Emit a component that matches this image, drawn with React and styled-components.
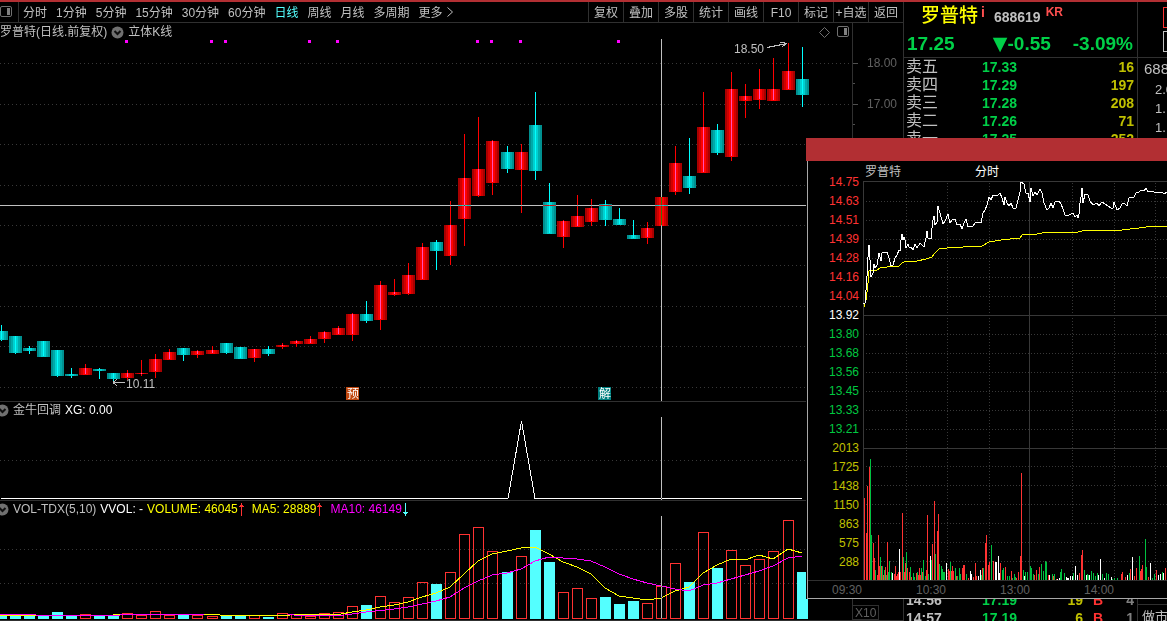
import React, { useState } from 'react';
import styled, { createGlobalStyle } from 'styled-components';

const GlobalStyle = createGlobalStyle`
  * {
    box-sizing: border-box;
  }
  body {
    margin: 0;
    background: #000;
    overflow: hidden;
  }
  button {
    border: 0;
    margin: 0;
    padding: 0;
    background: none;
    color: inherit;
    font: inherit;
    cursor: pointer;
    white-space: nowrap;
  }
`;

const Page = styled.div`
  min-height: 100vh;
  position: relative;
  border-top: 2px solid #b22f33;
  background: #000;
  color: #c0c0c0;
  font-family: "Liberation Sans", "Noto Sans CJK SC", sans-serif;
  font-size: 12px;
  line-height: 15px;
`;

const Workspace = styled.div`
  display: flex;
  align-items: stretch;
`;

const Main = styled.main`
  flex: 1;
  min-width: 0;
`;

const Toolbar = styled.nav`
  display: flex;
  justify-content: space-between;
  height: 21px;
  border-bottom: 1px solid #303030;
`;

const Periods = styled.div`
  display: flex;
  align-items: center;
  gap: 9px;
`;

const PanelToggle = styled.button`
  display: flex;
  align-items: center;
  height: 20px;
  padding-right: 6px;
  margin-right: -5px;
  border-right: 1px solid #303030;
`;

const PeriodButton = styled.button`
  padding-top: 2px;
  color: ${(p) => (p.$active ? '#54ffff' : '#c0c0c0')};
`;

const Tools = styled.div`
  display: flex;
`;

const ToolButton = styled.button`
  width: 35px;
  padding-top: 2px;
  border-left: 1px solid #303030;
`;

const Charts = styled.div`
  display: grid;
  grid-template-columns: minmax(0, 1fr) 51px;
`;

const Panel = styled.section`
  border-bottom: 1px solid #303030;
`;

const PanelTitle = styled.div`
  display: flex;
  align-items: center;
  gap: 4px;
  height: ${(p) => p.$height}px;
  padding-top: 2px;
  white-space: nowrap;
`;

const Reading = styled.span`
  display: flex;
  align-items: center;
  gap: 1px;
  margin-right: ${(p) => (p.$arrow ? '4px' : '0')};
  color: ${(p) => p.$color || '#c0c0c0'};
`;

const FoldButton = styled.button`
  display: flex;
  margin-left: ${(p) => (p.$clipped ? '-4px' : '0')};
`;

const PanelIcons = styled.div`
  display: flex;
  align-items: center;
  gap: 7px;
  margin-left: auto;
  padding-right: 3px;
`;

const Plot = styled.svg`
  display: block;
  width: 100%;
  height: ${(p) => p.$height}px;
  shape-rendering: crispEdges;
`;

const CrossLine = styled.line`
  stroke: #c0c0c0;
  mix-blend-mode: difference;
`;

const PriceAxis = styled.div`
  display: flex;
  flex-direction: column;
  justify-content: space-between;
  border-left: 1px solid #303030;
  border-bottom: 1px solid #303030;
`;

const AxisList = styled.div`
  padding-top: 20px;
`;

const AxisLabel = styled.div`
  display: flex;
  align-items: center;
  justify-content: space-between;
  height: 41px;
  padding-right: 6px;
  color: #606060;
`;

const Multiplier = styled.div`
  width: 26px;
  height: 15px;
  padding-left: 2px;
  border: 1px solid #303030;
  border-left: 0;
  line-height: 14px;
  color: #606060;
`;

const Quote = styled.aside`
  flex: none;
  display: flex;
  flex-direction: column;
  justify-content: space-between;
  width: 234px;
  border-left: 1px solid #303030;
`;

const QuoteHead = styled.header`
  border-bottom: 1px solid #303030;
`;

const NameRow = styled.div`
  display: flex;
  align-items: flex-start;
  height: 28px;
  padding-left: 17px;
`;

const StockName = styled.h1`
  margin: 0;
  color: #ffff00;
  font-size: 19px;
  font-weight: 500;
  line-height: 28px;
`;

const Code = styled.span`
  padding: 8px 2px 0 9px;
  font-size: 14px;
  font-weight: bold;
`;

const Tag = styled.span`
  padding: 3px 0 0 3px;
  color: #ff5050;
  font-size: ${(p) => p.$size}px;
  font-weight: bold;
`;

const PriceRow = styled.div`
  display: flex;
  justify-content: flex-end;
  gap: 22px;
  align-items: center;
  height: 27px;
  padding: 0 4px 0 3px;
  color: #00d048;
  font-size: 19px;
  font-weight: bold;
`;

const LastPrice = styled.span`
  margin-right: auto;
`;

const DownMark = styled.span`
  font-family: "DejaVu Sans", sans-serif;
`;

const QuoteTable = styled.table`
  width: 100%;
  table-layout: fixed;
  border-collapse: collapse;
  font-size: 14px;
  font-weight: bold;
`;

const QuoteRow = styled.tr`
  height: 18px;
`;

const Level = styled.th`
  width: 78px;
  padding: 0 0 0 2px;
  text-align: left;
  font-size: ${(p) => (p.$big ? 16 : 14)}px;
  font-weight: ${(p) => (p.$big ? 'normal' : 'bold')};
  line-height: 18px;
`;

const Cell = styled.td`
  width: ${(p) => (p.$width ? `${p.$width}px` : 'auto')};
  padding: 0 3px 0 0;
  text-align: ${(p) => p.$align || 'left'};
  color: ${(p) => p.$color};
  line-height: 18px;
`;

const Trades = styled.div`
  height: 30px;
  overflow: hidden;
`;

const Side = styled.aside`
  flex: none;
  display: flex;
  flex-direction: column;
  justify-content: space-between;
  width: 30px;
  overflow: hidden;
  border-left: 1px solid #303030;
  white-space: nowrap;
`;

const SideHead = styled.div`
  display: grid;
  gap: 3px;
  height: 56px;
  padding: 5px 0 5px 25px;
  border-bottom: 1px solid #303030;
`;

const SideBox = styled.div`
  width: 40px;
  border: 1px solid ${(p) => p.$color};
`;

const SideCode = styled.div`
  padding-left: 6px;
  font-size: 15px;
  line-height: 22px;
`;

const SideValue = styled.div`
  padding-left: 17px;
  font-size: 13px;
  line-height: 19px;
`;

const SideFoot = styled.div`
  height: 17px;
  padding: 4px 0 0 4px;
  border-top: 1px solid #303030;
  font-size: 13px;
`;

const Popup = styled.section`
  position: absolute;
  top: 136px;
  right: 0;
  width: 361px;
  background: #000;
`;

const PopupBar = styled.div`
  height: 23px;
  background: #b22f33;
`;

const PopupBody = styled.div`
  margin-left: 1px;
  border-left: 1px solid #a8a8a8;
  border-bottom: 1px solid #a8a8a8;
`;

const PopupGrid = styled.div`
  display: grid;
  grid-template-columns: 55px minmax(0, 1fr);
  border-bottom: 1px solid #303030;
`;

const Scale = styled.div`
  padding: 12px 4px 0 0;
  text-align: right;
`;

const ScaleLabel = styled.div`
  height: 19px;
  line-height: 19px;
  color: ${(p) => p.$color};
`;

const PopupTitle = styled.div`
  display: flex;
  gap: 74px;
  height: 20px;
  padding-left: 2px;
  line-height: 22px;
`;

const Bright = styled.span`
  color: #fff;
`;

const Times = styled.div`
  display: flex;
  height: 17px;
  padding-left: 24px;
  overflow: hidden;
  line-height: 18px;
  color: #606060;
`;

const TimeLabel = styled.span`
  flex: none;
  width: 84px;
`;

const RED = '#ff3232';
const CYAN = '#54ffff';
const GREEN = '#00c840';
const YELLOW = '#c0c000';

const periods = ['分时', '1分钟', '5分钟', '15分钟', '30分钟', '60分钟', '日线', '周线', '月线', '多周期', '更多'];
const tools = ['复权', '叠加', '多股', '统计', '画线', 'F10', '标记', '+自选', '返回'];

// center x, high, low, body top, body bottom, direction, volume top
const candles = [
  [1, 325, 341, 331, 340, 'd', 615], [15, 336, 354, 336, 353, 'd', 615],
  [29, 346, 354, 348, 351, 'd', 616], [43, 341, 357, 341, 357, 'd', 616],
  [57, 350, 377, 350, 376, 'd', 612], [71, 368, 378, 374, 376, 'd', 616],
  [85, 364, 375, 368, 375, 'u', 614], [99, 368, 379, 369, 371, 'd', 615],
  [113, 373, 381, 373, 379, 'd', 616], [127, 370, 380, 373, 378, 'u', 613],
  [141, 360, 376, 373, 374, 'u', 615], [155, 354, 378, 359, 372, 'u', 611],
  [169, 349, 360, 352, 360, 'u', 615], [183, 348, 361, 348, 355, 'd', 615],
  [197, 350, 358, 351, 355, 'u', 615], [212, 346, 354, 350, 354, 'u', 616],
  [226, 343, 354, 343, 353, 'd', 616], [240, 347, 359, 347, 359, 'd', 616],
  [254, 349, 362, 349, 358, 'u', 615], [268, 346, 356, 349, 354, 'd', 617],
  [282, 343, 349, 345, 347, 'u', 613], [296, 340, 347, 341, 344, 'u', 614],
  [310, 336, 344, 339, 344, 'u', 616], [324, 331, 343, 332, 339, 'u', 613],
  [338, 326, 335, 328, 335, 'u', 612], [352, 313, 341, 314, 335, 'u', 606],
  [366, 301, 323, 314, 321, 'd', 605], [380, 281, 330, 285, 320, 'u', 596],
  [394, 279, 296, 292, 295, 'u', 602], [408, 263, 295, 275, 294, 'u', 597],
  [422, 243, 280, 247, 280, 'u', 582], [436, 240, 270, 242, 251, 'd', 584],
  [450, 201, 265, 225, 256, 'u', 572], [464, 134, 246, 178, 219, 'u', 534],
  [478, 117, 197, 169, 196, 'u', 527], [492, 140, 195, 141, 183, 'u', 551],
  [507, 146, 173, 152, 169, 'd', 572], [521, 144, 213, 152, 170, 'u', 556],
  [535, 92, 180, 125, 171, 'd', 530], [549, 183, 234, 202, 234, 'd', 562],
  [563, 220, 248, 221, 237, 'u', 592], [577, 195, 227, 216, 227, 'u', 588],
  [591, 199, 226, 208, 222, 'u', 598], [605, 200, 226, 204, 220, 'd', 597],
  [619, 208, 225, 219, 225, 'd', 604], [633, 220, 239, 235, 239, 'd', 601],
  [647, 222, 244, 228, 238, 'u', 603], [661, 197, 226, 197, 226, 'u', 586],
  [675, 146, 195, 163, 192, 'u', 563], [689, 138, 194, 176, 188, 'd', 582],
  [703, 92, 173, 127, 173, 'u', 532], [717, 124, 155, 130, 153, 'd', 568],
  [731, 72, 161, 89, 157, 'u', 550], [745, 84, 118, 96, 101, 'u', 565],
  [759, 69, 109, 89, 100, 'u', 559], [773, 58, 101, 89, 101, 'u', 551],
  [788, 43, 90, 71, 90, 'u', 520], [802, 47, 107, 79, 95, 'd', 572],
];

const signals = [126, 211, 225, 309, 337, 477, 491, 520, 618];

const ma5 = '0,615 107,616 120,614 204,614 220,615 290,615 317,614 341,614 352,612 366,610 380,607 394,605 408,602 422,597 436,593 450,587 464,574 478,561 492,554 507,551 521,548 535,547 549,554 563,562 577,567 591,574 605,588 619,596 633,598 647,600 661,598 675,591 689,587 703,573 717,565 731,559 745,560 759,555 773,559 788,549 802,553';
const ma10 = '0,614 36,615 90,615 120,615 205,614 288,614 300,616 345,615 366,612 394,609 408,607 422,604 436,601 450,597 464,588 478,581 492,575 507,573 521,569 535,561 549,557 563,558 577,559 591,561 605,567 619,574 633,579 647,583 661,586 675,589 689,591 703,585 717,583 731,579 745,575 759,571 773,566 788,558 802,556';

const intraday = '0,122 2,122 3,109 4,95 5,76 6,64 7,79 8,96 10,92 11,83 12,87 14,84 16,72 17,76 18,80 19,72 20,71 24,71 26,77 28,85 30,84 32,77 34,74 36,69 37,70 38,59 39,53 40,59 41,56 42,59 43,67 45,63 46,66 48,66 50,69 52,63 54,67 57,62 61,66 63,57 64,50 65,57 68,58 69,47 70,39 71,35 72,44 74,41 75,25 77,32 80,43 82,40 85,33 87,42 89,39 92,38 94,44 97,43 99,48 101,42 103,38 105,46 110,45 112,42 115,41 118,42 120,32 122,29 124,24 126,16 128,19 130,14 135,14 137,12 139,17 141,24 142,16 144,22 146,25 148,22 150,27 153,27 155,19 157,11 158,1 161,3 163,12 165,12 167,21 168,7 170,15 172,11 174,14 177,8 179,12 181,22 184,29 186,27 188,22 190,27 192,21 196,20 198,23 200,28 202,34 206,34 210,32 212,36 214,34 215,37 216,33 217,22 218,16 219,7 220,22 222,13 225,14 227,20 230,24 234,22 236,25 239,21 245,25 248,27 250,27 251,21 254,29 257,27 259,23 261,22 264,25 266,17 271,16 273,12 276,11 278,9 281,10 283,7 285,11 288,10 291,11 293,11 296,12 299,11 301,13 304,11';
const average = '1,126 3,119 4,111 5,102 6,90 14,89 17,87 24,86 36,85 39,82 43,80 54,80 63,78 69,76 72,72 76,68 84,67 100,66 119,65 126,61 138,59 157,57 159,54 174,53 184,51 215,51 223,49 259,49 276,47 283,46 304,45';

// each entry is minute, height and colour letter
const ticks = '1,82r 3,47r 4,94r 6,113r 7,121g 8,45g 10,37r 11,22r 12,10g 14,5r 15,45r 16,14r 17,23g 18,14r 19,14g 20,5r 21,10g 22,13r 23,5g 24,38r 25,8g 26,19g 28,8g 29,7w 31,6r 32,14r 33,4r 34,6r 35,8r 36,31w 37,8r 39,67r 40,23g 41,8r 42,17r 43,28g 44,12r 46,8r 47,13g 48,3r 50,7g 51,3g 53,7r 54,8g 55,5r 56,12r 57,5r 58,12g 59,8r 60,20g 62,4g 63,10r 64,65r 65,6g 67,24w 68,20g 69,36r 71,79r 72,26g 74,49r 75,66r 76,16g 78,14g 79,11g 80,8g 81,8g 83,17w 85,11r 86,9r 87,18g 88,9r 89,14r 90,9r 92,12g 93,4r 94,4g 96,12g 97,6g 99,12r 100,15r 101,15r 103,6g 105,2r 107,9w 108,6w 110,3r 112,17r 113,4r 115,4w 117,10w 118,5g 119,12r 120,12g 122,37r 123,45r 125,15r 126,18r 128,35g 130,19r 132,18w 133,18w 135,24w 136,7w 137,17r 139,10g 140,12g 142,13r 144,4g 146,4g 148,9r 149,2g 151,6g 152,3g 153,2r 155,8r 157,24r 158,107r 160,10g 161,4w 162,8g 164,8g 167,14g 168,12g 170,6g 171,5r 173,10r 175,6g 176,13r 178,16g 180,9g 182,19g 183,18g 185,5r 186,5w 189,6g 190,4r 191,6g 193,1r 194,1w 196,2w 197,8g 198,11g 201,7g 203,3w 204,2w 205,2w 207,4w 209,4w 210,7g 212,14w 214,5w 216,7r 218,25r 219,30r 221,10g 223,5w 224,6g 225,5g 226,5w 228,9g 230,7g 232,4g 234,7g 235,5w 237,21w 239,6g 241,2w 243,7g 245,6g 248,3w 249,1g 251,2g 254,2g 258,6r 259,8r 262,3r 264,5w 266,7g 267,11r 269,23w 271,4r 273,12r 276,24g 277,9r 278,11r 279,15r 282,41g 283,13g 285,3r 287,17w 289,2g 291,6g 293,10r 295,5w 297,6w 299,8g 300,7w 302,12r';
const tickColors = { r: RED, g: '#00c040', w: '#fff' };

const scale = [
  ...['14.75', '14.63', '14.51', '14.39', '14.28', '14.16', '14.04'].map((t) => [t, RED]),
  ['13.92', '#fff'],
  ...['13.80', '13.68', '13.56', '13.45', '13.33', '13.21'].map((t) => [t, GREEN]),
  ...['2013', '1725', '1438', '1150', '863', '575', '288'].map((t) => [t, YELLOW]),
];

const asks = [
  ['卖五', '17.33', '16'],
  ['卖四', '17.29', '197'],
  ['卖三', '17.28', '208'],
  ['卖二', '17.26', '71'],
  ['卖一', '17.25', '252'],
];

const trades = [
  ['14:56', '17.19', '19', 'B', '4'],
  ['14:57', '17.19', '6', 'B', '1'],
];

function SplitIcon() {
  return (
    <svg width="12" height="12" viewBox="0 0 12 12" aria-hidden="true">
      <rect x="0.5" y="0.5" width="11" height="10" rx="1.5" fill="none" stroke="#707070" />
      <rect x="7" y="2" width="3" height="7" fill="#808080" />
    </svg>
  );
}

function Fold({ clipped, label }) {
  return (
    <FoldButton $clipped={clipped} aria-label={label}>
      <svg width="13" height="13" viewBox="0 0 13 13">
        <circle cx="6.5" cy="6.5" r="6" fill="#707070" />
        <path d="M3.5 5l3 3 3-3" fill="none" stroke="#101010" strokeWidth="2" />
      </svg>
    </FoldButton>
  );
}

function Arrow({ down }) {
  return (
    <svg width="5" height="13" viewBox="0 0 5 13" shapeRendering="crispEdges" aria-hidden="true">
      {down
        ? <path d="M2 0h1v9h2v1h-1v1h-1v2h-1v-2h-1v-1h-1v-1h2z" fill={CYAN} />
        : <path d="M2 13h1v-9h2v-1h-1v-1h-1v-2h-1v2h-1v1h-1v1h2z" fill={RED} />}
    </svg>
  );
}

function DottedRows({ rows }) {
  return rows.map((y) => (
    <line key={y} x1="0" x2="852" y1={y + 0.5} y2={y + 0.5} stroke="#383838" strokeDasharray="1 3" />
  ));
}

function Candle({ data }) {
  const [x, high, low, top, bottom, dir] = data;
  const up = dir === 'u';
  const shades = up ? ['#a80000', '#d00000', '#ff0000'] : ['#009090', '#00aaaa', '#00d0d0'];
  const h = bottom - top;
  return (
    <g>
      <rect x={x} y={high} width="1" height={low - high} fill={up ? '#ff0000' : '#00ffff'} />
      <rect x={x - 6} y={top} width="13" height={h} fill={shades[0]} />
      <rect x={x - 4} y={top} width="9" height={h} fill={shades[1]} />
      <rect x={x - 2} y={top} width="5" height={h} fill={shades[2]} />
      <rect x={x} y={top} width="1" height={Math.max(h - 1, 1)} fill={up ? '#ff50b8' : '#00ffff'} />
    </g>
  );
}

function VolumeBar({ data }) {
  const [x, , , , , dir, top] = data;
  if (dir === 'd') {
    return <rect x={x - 5} y={top} width="11" height={619 - top} fill={CYAN} />;
  }
  return <rect x={x - 4.5} y={top + 0.5} width="10" height={618 - top} fill="none" stroke={RED} />;
}

function Badge({ x, color, children }) {
  return (
    <g>
      <rect x={x} y="387" width="13" height="13" fill={color} />
      <text x={x + 1} y="398" fontSize="12" fill="#fff">{children}</text>
    </g>
  );
}

function PricePanel() {
  return (
    <Panel>
      <PanelTitle $height={16}>
        <Reading>罗普特(日线.前复权)</Reading>
        <Fold label="主图指标" />
        <Reading>立体K线</Reading>
        <PanelIcons>
          <svg width="11" height="11" viewBox="0 0 11 11" aria-hidden="true">
            <path d="M5.5 0.5l5 5-5 5-5-5z" fill="none" stroke="#707070" />
          </svg>
          <SplitIcon />
        </PanelIcons>
      </PanelTitle>
      <Plot $height={362} viewBox="0 39 852 362" preserveAspectRatio="xMinYMin meet">
        <DottedRows rows={[63, 104, 144, 185, 225, 265, 306, 346, 387]} />
        {signals.map((x) => <rect key={x} x={x - 1} y="40" width="3" height="3" fill="#ff00ff" />)}
        {candles.map((c) => <Candle key={c[0]} data={c} />)}
        <path d="M113 382.5h12M113 382.5l4-3M113 382.5l4 3" fill="none" stroke="#c0c0c0" />
        <text x="126" y="388" fontSize="12" fill="#c0c0c0">10.11</text>
        <text x="734" y="53" fontSize="12" fill="#c0c0c0">18.50</text>
        <path d="M767 47.5l20-4M780 42l7 1.500M782 47l5-4" fill="none" stroke="#c0c0c0" />
        <Badge x={346} color="#c04810">预</Badge>
        <Badge x={598} color="#008080">解</Badge>
        <CrossLine x1="0" x2="852" y1="205.5" y2="205.5" />
        <CrossLine x1="661.5" x2="661.5" y1="39" y2="401" />
      </Plot>
    </Panel>
  );
}

function SignalPanel() {
  return (
    <Panel>
      <PanelTitle $height={15}>
        <Fold clipped label="金牛回调指标" />
        <Reading>金牛回调</Reading>
        <Reading $color="#fff">XG: 0.00</Reading>
      </PanelTitle>
      <Plot $height={83} viewBox="0 417 852 83" preserveAspectRatio="xMinYMin meet">
        <DottedRows rows={[460]} />
        <polyline points="1,498.5 508,498.5 521.5,421 535,498.5 802,498.5" fill="none" stroke="#fff" />
        <CrossLine x1="661.5" x2="661.5" y1="417" y2="500" />
      </Plot>
    </Panel>
  );
}

function VolumePanel() {
  return (
    <Panel>
      <PanelTitle $height={15}>
        <Fold clipped label="成交量指标" />
        <Reading>VOL-TDX(5,10)</Reading>
        <Reading $color="#fff">VVOL: -</Reading>
        <Reading $color="#ffff00" $arrow>VOLUME: 46045<Arrow /></Reading>
        <Reading $color="#ffff00" $arrow>MA5: 28889<Arrow /></Reading>
        <Reading $color="#ff00ff" $arrow>MA10: 46149<Arrow down /></Reading>
      </PanelTitle>
      <Plot $height={104} viewBox="0 516 852 104" preserveAspectRatio="xMinYMin meet">
        <DottedRows rows={[549, 583]} />
        {candles.map((c) => <VolumeBar key={c[0]} data={c} />)}
        <polyline points={ma5} fill="none" stroke="#ffff00" />
        <polyline points={ma10} fill="none" stroke="#ff00ff" />
        <CrossLine x1="661.5" x2="661.5" y1="516" y2="619" />
      </Plot>
    </Panel>
  );
}

function IntradayPopup() {
  const dotted = [20, 39, 58, 77, 96, 115, 153, 172, 191, 210, 229, 248, 285, 304, 323, 342, 361, 380];
  return (
    <Popup>
      <PopupBar />
      <PopupBody>
        <PopupGrid>
          <Scale>
            {scale.map(([text, color]) => <ScaleLabel key={text} $color={color}>{text}</ScaleLabel>)}
          </Scale>
          <div>
            <PopupTitle>
              <span>罗普特</span>
              <Bright>分时</Bright>
            </PopupTitle>
            <Plot $height={399} viewBox="0 0 304 399" preserveAspectRatio="xMinYMin meet">
              {dotted.map((y) => (
                <line key={y} x1="3" x2="304" y1={y + 0.5} y2={y + 0.5} stroke="#383838" strokeDasharray="1 2" />
              ))}
              {[43, 84, 126, 209, 251, 292].map((x) => (
                <line key={x} x1={x + 0.5} x2={x + 0.5} y1="2" y2="399" stroke="#383838" strokeDasharray="1 2" />
              ))}
              <path d="M0.5 399V0.500H304M0 134.500H304M0 267.500H304M166.500 0V399" fill="none" stroke="#383838" />
              {ticks.split(' ').map((t) => {
                const [x, rest] = t.split(',');
                const h = parseInt(rest, 10);
                return <rect key={x} x={x} y={399 - h} width="1" height={h} fill={tickColors[rest.slice(-1)]} />;
              })}
              <polyline points={average} fill="none" stroke="#ffff00" />
              <polyline points={intraday} fill="none" stroke="#fff" />
            </Plot>
          </div>
        </PopupGrid>
        <Times>
          {['09:30', '10:30', '13:00', '14:00'].map((t) => <TimeLabel key={t}>{t}</TimeLabel>)}
        </Times>
      </PopupBody>
    </Popup>
  );
}

export default function App() {
  const [period, setPeriod] = useState('日线');

  return (
    <Page>
      <GlobalStyle />
      <Workspace>
        <Main>
          <Toolbar>
            <Periods>
              <PanelToggle aria-label="侧栏"><SplitIcon /></PanelToggle>
              {periods.map((p) => (
                <PeriodButton key={p} $active={p === period} onClick={() => setPeriod(p)}>
                  {p}
                  {p === '更多' && (
                    <svg width="11" height="10" viewBox="0 0 11 10" aria-hidden="true">
                      <path d="M4.5 0.500l5 4.500-5 4.500" fill="none" stroke="#c0c0c0" />
                    </svg>
                  )}
                </PeriodButton>
              ))}
            </Periods>
            <Tools>
              {tools.map((t) => <ToolButton key={t}>{t}</ToolButton>)}
            </Tools>
          </Toolbar>
          <Charts>
            <div>
              <PricePanel />
              <SignalPanel />
              <VolumePanel />
            </div>
            <PriceAxis>
              <AxisList>
                {['18.00', '17.00'].map((t) => (
                  <AxisLabel key={t}>
                    <svg width="6" height="41" viewBox="0 0 6 41" shapeRendering="crispEdges" aria-hidden="true">
                      <path d="M0 20.500h5M0 40.500h2" stroke="#505050" />
                    </svg>
                    {t}
                  </AxisLabel>
                ))}
              </AxisList>
              <Multiplier>X10</Multiplier>
            </PriceAxis>
          </Charts>
        </Main>
        <Quote>
          <div>
            <QuoteHead>
              <NameRow>
                <StockName>罗普特</StockName>
                <Tag $size={14}>i</Tag>
                <Code>688619</Code>
                <Tag $size={12}>KR</Tag>
              </NameRow>
              <PriceRow>
                <LastPrice>17.25</LastPrice>
                <span><DownMark>▼</DownMark>-0.55</span>
                <span>-3.09%</span>
              </PriceRow>
            </QuoteHead>
            <QuoteTable>
              <tbody>
                {asks.map(([level, price, volume]) => (
                  <QuoteRow key={level}>
                    <Level scope="row" $big>{level}</Level>
                    <Cell $color="#00d048">{price}</Cell>
                    <Cell $color={YELLOW} $align="right">{volume}</Cell>
                  </QuoteRow>
                ))}
              </tbody>
            </QuoteTable>
          </div>
          <Trades>
            <QuoteTable>
              <tbody>
                {trades.map(([time, price, volume, side, count]) => (
                  <QuoteRow key={time}>
                    <Level scope="row">{time}</Level>
                    <Cell $width={60} $color="#00d048">{price}</Cell>
                    <Cell $width={44} $color={YELLOW} $align="right">{volume}</Cell>
                    <Cell $width={20} $color={RED} $align="right">{side}</Cell>
                    <Cell $color="#808080" $align="right">{count}</Cell>
                  </QuoteRow>
                ))}
              </tbody>
            </QuoteTable>
          </Trades>
        </Quote>
        <Side>
          <div>
            <SideHead>
              <SideBox $color={RED} />
              <SideBox $color="#c0c0c0" />
            </SideHead>
            <SideCode>688</SideCode>
            <SideValue>2.0</SideValue>
            <SideValue>1.</SideValue>
            <SideValue>1.</SideValue>
          </div>
          <SideFoot>做市</SideFoot>
        </Side>
      </Workspace>
      <IntradayPopup />
    </Page>
  );
}
